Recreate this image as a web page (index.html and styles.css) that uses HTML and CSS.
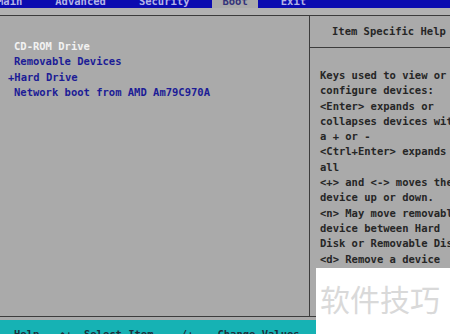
FILE: index.html
```html
<!DOCTYPE html>
<html lang="en">
<head>
  <meta charset="UTF-8">
  <title>BIOS Setup Utility - Boot</title>
  <link rel="stylesheet" href="styles.css">
</head>
<body>
  <div class="screen">
    <!-- Top menu -->
    <div class="menubar">
      <div class="tabs">
        <span class="tab">Main</span>
        <span class="tab">Advanced</span>
        <span class="tab">Security</span>
        <span class="tab active">Boot</span>
        <span class="tab">Exit</span>
      </div>
    </div>
    <div class="under-menu"></div>

    <!-- Main area -->
    <div class="main">
      <div class="boot-list">
        <div class="item selected">CD-ROM Drive</div>
        <div class="item">Removable Devices</div>
        <div class="item expandable">+Hard Drive</div>
        <div class="item">Network boot from AMD Am79C970A</div>
      </div>
      <div class="help">
        <div class="help-title">Item Specific Help</div>
        <div class="help-text">
          <div>Keys used to view or</div>
          <div>configure devices:</div>
          <div>&lt;Enter&gt; expands or</div>
          <div>collapses devices wit</div>
          <div>a + or -</div>
          <div>&lt;Ctrl+Enter&gt; expands</div>
          <div>all</div>
          <div>&lt;+&gt; and &lt;-&gt; moves the</div>
          <div>device up or down.</div>
          <div>&lt;n&gt; May move removabl</div>
          <div>device between Hard</div>
          <div>Disk or Removable Dis</div>
          <div>&lt;d&gt; Remove a device</div>
        </div>
      </div>
    </div>

    <!-- Key legend -->
    <div class="statusbar">
      <div class="keys">
        <span class="key key-help">Help</span>
        <span class="key key-arrows">↑↓</span>
        <span class="key key-select">Select Item</span>
        <span class="key key-plus">-/+</span>
        <span class="key">Change Values</span>
      </div>
    </div>

    <div class="watermark">软件技巧</div>
  </div>
</body>
</html>
```

FILE: styles.css
```css
:root {
  --bios-blue: #0b0bb0;
  --bios-grey: #aaaaaa;
  --line: #3c3c3c;
  --teal: #16b2b4;
  --text-blue: #1c1c96;
}

body {
  margin: 0;
  padding: 0;
  background-color: var(--bios-grey);
  font-family: 'DejaVu Sans Mono', 'Liberation Mono', monospace;
  font-size: 10.5px;
  font-weight: bold;
}

.screen {
  position: relative;
  width: 450px;
  height: 334px;
  overflow: hidden;
}

.menubar {
  height: 8px;
  background-color: var(--bios-blue);
  overflow: hidden;
}

.tabs {
  display: flex;
  gap: 13px;
  margin-top: -5px;
  margin-left: -13px;
  line-height: 13px;
}

.tab {
  padding: 0 10px;
  color: #b4b4e6;
}

.tab.active {
  background-color: var(--bios-grey);
  color: #33337a;
}

.under-menu {
  height: 7px;
  background-color: #b2b2b2;
  border-bottom: 1px solid var(--line);
}

.main {
  display: grid;
  grid-template-columns: 309px 1fr;
  height: 300px;
  border-bottom: 1px solid var(--line);
}

.boot-list {
  padding: 23px 0 0 8px;
  line-height: 15.3px;
}

.item {
  color: var(--text-blue);
  padding-left: 6px;
}

.item.selected {
  color: #f2f2f2;
}

.item.expandable {
  padding-left: 0;
}

.help {
  border-left: 1px solid var(--line);
  color: #262626;
}

.help-title {
  height: 31px;
  line-height: 31px;
  padding-left: 22px;
  white-space: nowrap;
  border-bottom: 1px solid var(--line);
}

.help-text {
  padding: 20px 0 0 10px;
  line-height: 15.3px;
  white-space: nowrap;
}

.statusbar {
  margin-top: 3px;
  height: 14px;
  background-color: var(--teal);
  overflow: hidden;
}

.keys {
  display: flex;
  padding-left: 14px;
  padding-top: 8px;
  line-height: 13px;
  color: #1f2f3a;
  white-space: nowrap;
}

.key-help { margin-right: 20px; }
.key-arrows { margin-right: 12px; }
.key-select { margin-right: 21px; }
.key-plus { margin-right: 24px; }

.watermark {
  position: absolute;
  left: 316px;
  top: 268px;
  width: 134px;
  height: 66px;
  background-color: #ffffff;
  color: #d9d9d9;
  font-family: 'Noto Sans CJK SC', sans-serif;
  font-weight: normal;
  font-size: 30px;
  line-height: 60px;
  padding-left: 4px;
  box-sizing: border-box;
  white-space: nowrap;
}
```
